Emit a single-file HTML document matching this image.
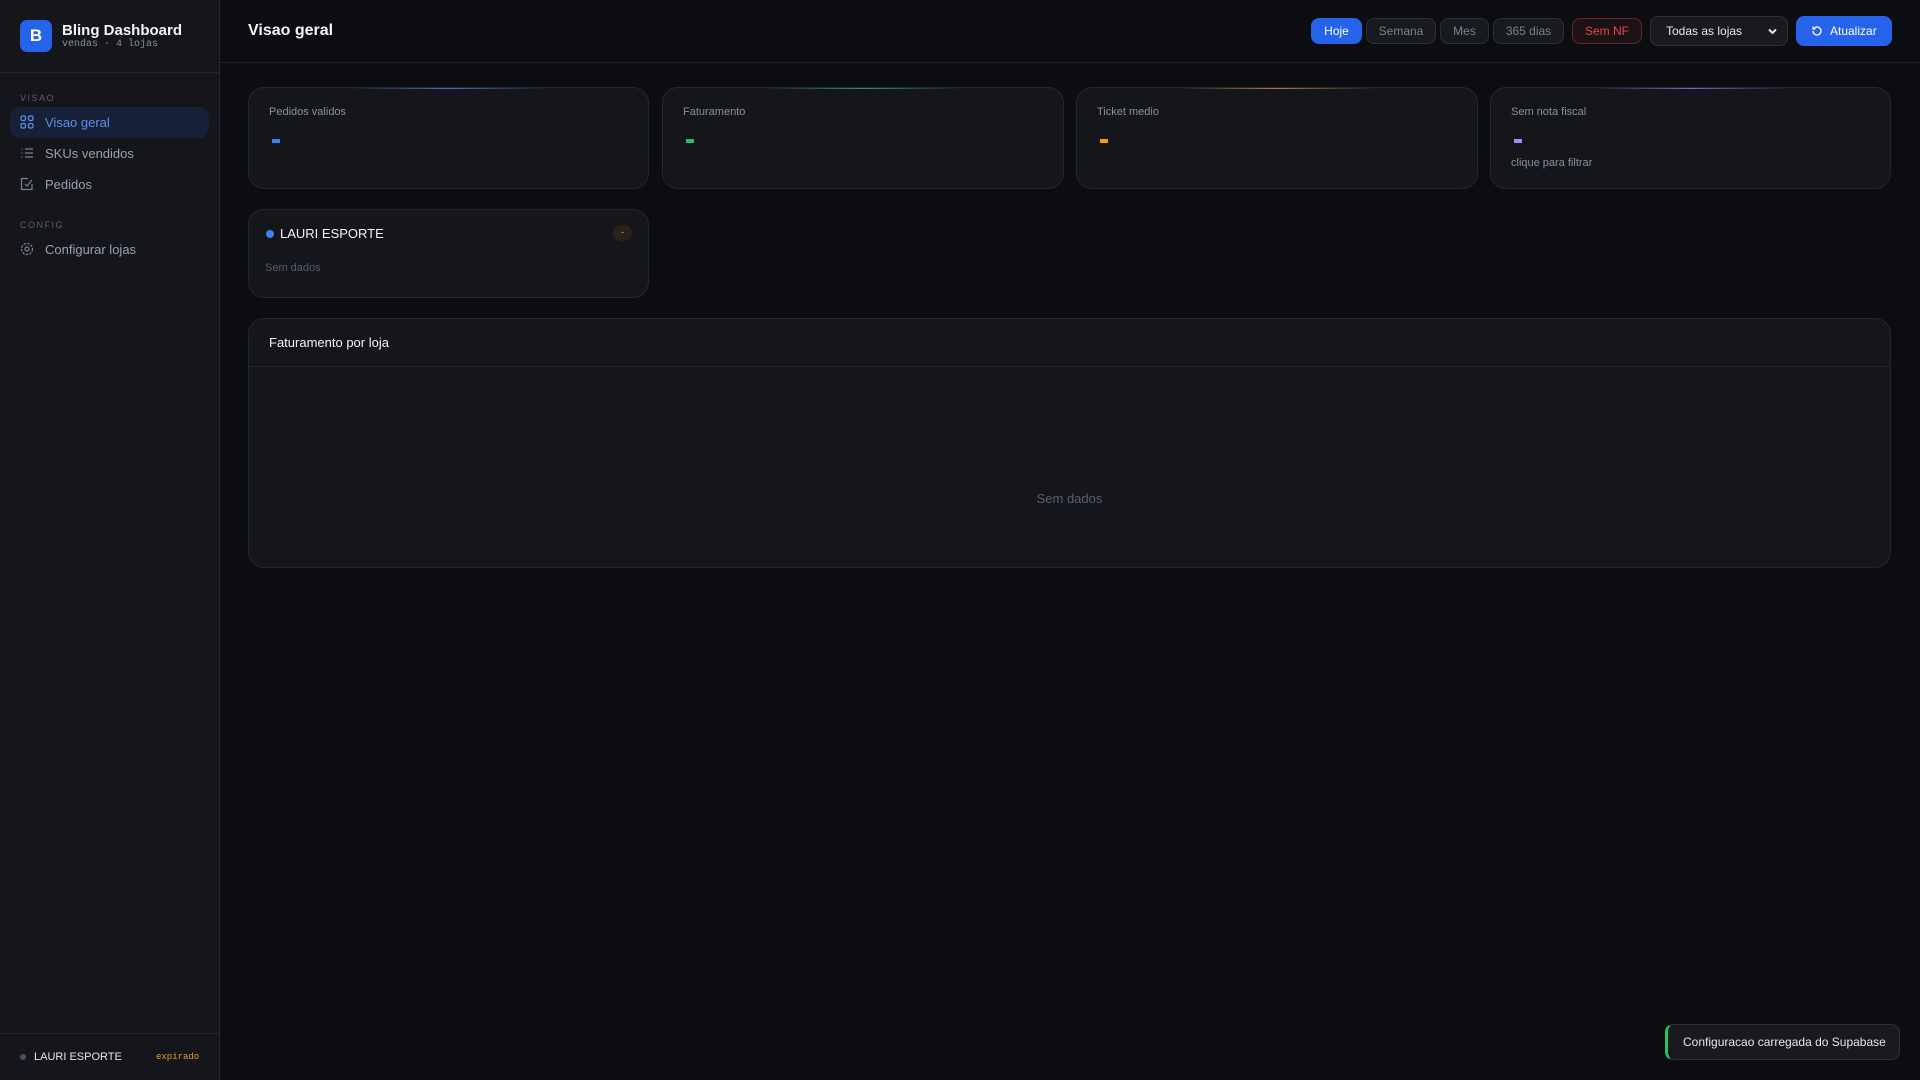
<!DOCTYPE html>
<html><head><meta charset="utf-8"><style>
*{box-sizing:border-box;margin:0;padding:0}
body{width:1920px;height:1080px;background:#0c0d10;font-family:"Liberation Sans",sans-serif;color:#e5e7eb;position:relative;overflow:hidden}
.sb{position:absolute;left:0;top:0;width:220px;height:1080px;background:#14161b;border-right:1px solid #23262d}
.logo{position:absolute;left:20px;top:20px;width:32px;height:32px;border-radius:7px;background:#2563eb;color:#fff;font-weight:bold;font-size:17px;text-align:center;line-height:32px}
.t1{position:absolute;left:62px;top:22px;font-size:15px;font-weight:bold;color:#f3f4f6}
.t2{position:absolute;left:62px;top:39px;font-family:"Liberation Mono",monospace;font-size:10px;color:#8b8f99}
.sbl{position:absolute;left:0;top:72px;width:219px;border-top:1px solid #23262d}
.sec{position:absolute;left:20px;font-size:9px;letter-spacing:1.5px;color:#5b5f6a}
.it{position:absolute;left:10px;width:199px;height:31px;border-radius:10px;font-size:13px;color:#9ca0aa;line-height:31px;padding-left:35px}
.it.a{background:#172036;color:#5b8ff0}
.it svg{position:absolute;left:10px;top:8px}
.hdl{position:absolute;left:220px;top:62px;width:1700px;border-top:1px solid #1d2026}
h1{position:absolute;left:248px;top:22px;font-size:16px;font-weight:bold;color:#f3f4f6}
.pill{position:absolute;top:18px;height:26px;border-radius:8px;border:1px solid #2c2f37;background:#181a20;color:#7d818c;font-size:12px;text-align:center;line-height:24px}
.card{position:absolute;background:#14161b;border:1px solid #23262d;border-radius:16px;overflow:hidden}
.lab{position:absolute;left:20px;top:18px;font-size:11px;color:#8b8f99}
.dash{position:absolute;left:23px;top:51px;width:8px;height:4px}
.gl{position:absolute;top:0;left:25%;width:50%;height:1px}
</style></head><body>
<div class="sb">
<div class="logo">B</div>
<div class="t1">Bling Dashboard</div>
<div class="t2">vendas · 4 lojas</div>
<div class="sbl"></div>
<div class="sec" style="top:93px">VISAO</div>
<div class="it a" style="top:107px"><svg width="14" height="14" viewBox="0 0 14 14" fill="none" stroke="#5b8ff0" stroke-width="1.2"><rect x="1" y="1" width="4.5" height="4.5" rx="1.5"/><rect x="8.5" y="1" width="4.5" height="4.5" rx="1.5"/><rect x="1" y="8.5" width="4.5" height="4.5" rx="1.5"/><rect x="8.5" y="8.5" width="4.5" height="4.5" rx="1.5"/></svg>Visao geral</div>
<div class="it" style="top:138px"><svg width="14" height="14" viewBox="0 0 14 14" fill="none" stroke="#7d818c" stroke-width="1.2"><path d="M5 3h8M5 7h8M5 11h8M1.5 3h1M1.5 7h1M1.5 11h1"/></svg>SKUs vendidos</div>
<div class="it" style="top:169px"><svg width="14" height="14" viewBox="0 0 14 14" fill="none" stroke="#7d818c" stroke-width="1.2"><path d="M12 7v5.5H1.5V1.5H8"/><path d="M5 7l2 2 5-6"/></svg>Pedidos</div>
<div class="sec" style="top:220px">CONFIG</div>
<div class="it" style="top:234px"><svg width="14" height="14" viewBox="0 0 14 14" fill="none" stroke="#7d818c" stroke-width="1.2"><circle cx="7" cy="7" r="2"/><circle cx="7" cy="7" r="5.5" stroke-dasharray="2.5 1.2"/></svg>Configurar lojas</div>
<div style="position:absolute;left:0;top:1033px;width:219px;border-top:1px solid #23262d"></div>
<div style="position:absolute;left:20px;top:1054px;width:6px;height:6px;border-radius:3px;background:#4b5060"></div>
<div style="position:absolute;left:34px;top:1051px;font-size:11px;color:#e5e7eb">LAURI ESPORTE</div>
<div style="position:absolute;left:156px;top:1052px;font-size:9px;font-family:'Liberation Mono',monospace;color:#e0a030">expirado</div>
</div>
<h1>Visao geral</h1>
<div class="hdl"></div>
<div class="pill" style="left:1311px;width:51px;background:#2563eb;border-color:#2563eb;color:#fff">Hoje</div>
<div class="pill" style="left:1366px;width:70px">Semana</div>
<div class="pill" style="left:1440px;width:49px">Mes</div>
<div class="pill" style="left:1493px;width:71px">365 dias</div>
<div class="pill" style="left:1572px;width:70px;border-color:#6b2329;background:#1a1215;color:#ef4444">Sem NF</div>
<div style="position:absolute;left:1650px;top:16px;width:138px;height:30px;border:1px solid #2c2f37;border-radius:8px;background:#181a20;font-size:12px;color:#e5e7eb;line-height:28px;padding-left:15px">Todas as lojas<svg style="position:absolute;right:10px;top:11px" width="9" height="7" viewBox="0 0 9 7" fill="none" stroke="#e5e7eb" stroke-width="2"><path d="M1 1.5l3.5 3.5 3.5-3.5"/></svg></div>
<div style="position:absolute;left:1796px;top:16px;width:96px;height:30px;border-radius:8px;background:#2563eb;color:#fff;font-size:12px;line-height:30px;padding-left:34px"><svg style="position:absolute;left:15px;top:9px" width="12" height="12" viewBox="0 0 12 12" fill="none" stroke="#fff" stroke-width="1.3"><path d="M2 6a4 4 0 1 0 1.2-2.9"/><path d="M2 1.5v2.5h2.5"/></svg>Atualizar</div>

<div class="card" style="left:248px;top:87px;width:401px;height:102px"><div class="gl" style="background:linear-gradient(90deg,transparent,#3b6fd8,transparent)"></div><div class="lab">Pedidos validos</div><div class="dash" style="background:#3b82f6"></div></div>
<div class="card" style="left:662px;top:87px;width:402px;height:102px"><div class="gl" style="background:linear-gradient(90deg,transparent,#16a34a,transparent)"></div><div class="lab">Faturamento</div><div class="dash" style="background:#22c55e"></div></div>
<div class="card" style="left:1076px;top:87px;width:402px;height:102px"><div class="gl" style="background:linear-gradient(90deg,transparent,#b7791f,transparent)"></div><div class="lab">Ticket medio</div><div class="dash" style="background:#f59e0b"></div></div>
<div class="card" style="left:1490px;top:87px;width:401px;height:102px"><div class="gl" style="background:linear-gradient(90deg,transparent,#7c5ce0,transparent)"></div><div class="lab">Sem nota fiscal</div><div class="dash" style="background:#a78bfa"></div><div style="position:absolute;left:20px;top:69px;font-size:11px;color:#8b8f99">clique para filtrar</div></div>

<div class="card" style="left:248px;top:209px;width:401px;height:89px">
<div style="position:absolute;left:17px;top:20px;width:8px;height:8px;border-radius:4px;background:#3b82f6"></div>
<div style="position:absolute;left:31px;top:16px;font-size:13px;color:#f3f4f6">LAURI ESPORTE</div>
<div style="position:absolute;right:16px;top:15px;width:19px;height:16px;border-radius:8px;background:#2a2218;color:#e0a030;font-size:9px;text-align:center;line-height:15px">-</div>
<div style="position:absolute;left:16px;top:52px;font-size:11px;color:#555a66">Sem dados</div>
</div>

<div class="card" style="left:248px;top:318px;width:1643px;height:250px">
<div style="position:absolute;left:20px;top:16px;font-size:13px;color:#f3f4f6">Faturamento por loja</div>
<div style="position:absolute;left:0;top:47px;width:100%;border-top:1px solid #23262d"></div>
<div style="position:absolute;left:0;width:100%;top:172px;text-align:center;font-size:13px;color:#5b5f6a">Sem dados</div>
</div>

<div style="position:absolute;left:1665px;top:1024px;width:235px;height:36px;border:1px solid #2c2f37;border-left:3px solid #22c55e;border-radius:8px;background:#181a20;color:#e5e7eb;font-size:12px;line-height:34px;padding-left:15px">Configuracao carregada do Supabase</div>
</body></html>
